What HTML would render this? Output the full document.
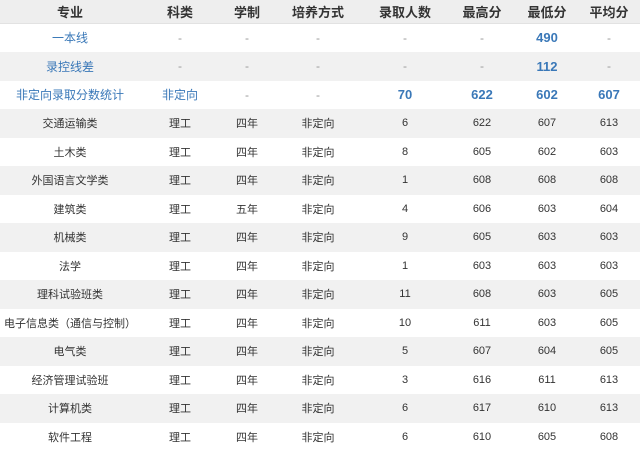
<!DOCTYPE html>
<html><head><meta charset="utf-8"><style>
body{margin:0;width:640px;height:443px;overflow:hidden;background:#fff;font-family:"Liberation Sans","Noto Sans CJK SC",sans-serif;}
table{border-collapse:collapse;table-layout:fixed;width:640px;}
td{text-align:center;padding:0;font-size:11px;color:#333;height:28.5px;white-space:nowrap;}
tr.h td{height:23px;font-size:13px;font-weight:bold;color:#333;background:#eeeeee;vertical-align:top;padding-top:2px;box-sizing:border-box;border-bottom:1px solid #e2e2e2}
tr.g td{background:#f1f1f1}
tr.b td{color:#3a78b8;font-size:12px;}
tr td.n{font-weight:bold;font-size:13px;color:#3a78b8}
tr td.d{color:#999}
</style></head><body>
<table>
<colgroup><col style="width:140px"><col style="width:80px"><col style="width:54px"><col style="width:88px"><col style="width:86px"><col style="width:68px"><col style="width:62px"><col style="width:62px"></colgroup>
<tr class="h"><td>专业</td><td>科类</td><td>学制</td><td>培养方式</td><td>录取人数</td><td>最高分</td><td>最低分</td><td>平均分</td></tr>
<tr class="b"><td>一本线</td><td class="d">-</td><td class="d">-</td><td class="d">-</td><td class="d">-</td><td class="d">-</td><td class="n">490</td><td class="d">-</td></tr>
<tr class="b g"><td>录控线差</td><td class="d">-</td><td class="d">-</td><td class="d">-</td><td class="d">-</td><td class="d">-</td><td class="n">112</td><td class="d">-</td></tr>
<tr class="b"><td>非定向录取分数统计</td><td>非定向</td><td class="d">-</td><td class="d">-</td><td class="n">70</td><td class="n">622</td><td class="n">602</td><td class="n">607</td></tr>
<tr class="g"><td>交通运输类</td><td>理工</td><td>四年</td><td>非定向</td><td>6</td><td>622</td><td>607</td><td>613</td></tr>
<tr><td>土木类</td><td>理工</td><td>四年</td><td>非定向</td><td>8</td><td>605</td><td>602</td><td>603</td></tr>
<tr class="g"><td>外国语言文学类</td><td>理工</td><td>四年</td><td>非定向</td><td>1</td><td>608</td><td>608</td><td>608</td></tr>
<tr><td>建筑类</td><td>理工</td><td>五年</td><td>非定向</td><td>4</td><td>606</td><td>603</td><td>604</td></tr>
<tr class="g"><td>机械类</td><td>理工</td><td>四年</td><td>非定向</td><td>9</td><td>605</td><td>603</td><td>603</td></tr>
<tr><td>法学</td><td>理工</td><td>四年</td><td>非定向</td><td>1</td><td>603</td><td>603</td><td>603</td></tr>
<tr class="g"><td>理科试验班类</td><td>理工</td><td>四年</td><td>非定向</td><td>11</td><td>608</td><td>603</td><td>605</td></tr>
<tr><td>电子信息类（通信与控制）</td><td>理工</td><td>四年</td><td>非定向</td><td>10</td><td>611</td><td>603</td><td>605</td></tr>
<tr class="g"><td>电气类</td><td>理工</td><td>四年</td><td>非定向</td><td>5</td><td>607</td><td>604</td><td>605</td></tr>
<tr><td>经济管理试验班</td><td>理工</td><td>四年</td><td>非定向</td><td>3</td><td>616</td><td>611</td><td>613</td></tr>
<tr class="g"><td>计算机类</td><td>理工</td><td>四年</td><td>非定向</td><td>6</td><td>617</td><td>610</td><td>613</td></tr>
<tr><td>软件工程</td><td>理工</td><td>四年</td><td>非定向</td><td>6</td><td>610</td><td>605</td><td>608</td></tr>
</table>
</body></html>
